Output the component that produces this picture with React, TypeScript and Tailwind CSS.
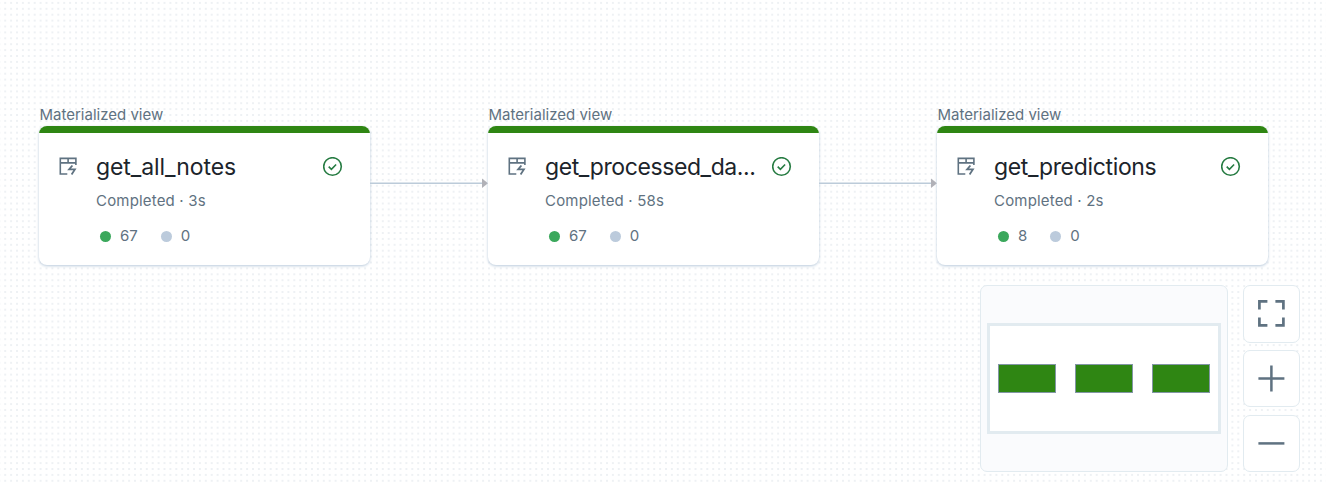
import React from 'react';

type Job = { name: string; tracking: string; time: string; done: number; queued: number };

const jobs: Job[] = [
  { name: 'get_all_notes', tracking: 'tracking-[-0.08px]', time: '3s', done: 67, queued: 0 },
  { name: 'get_processed_da...', tracking: 'tracking-[-0.4px]', time: '58s', done: 67, queued: 0 },
  { name: 'get_predictions', tracking: 'tracking-[-0.34px]', time: '2s', done: 8, queued: 0 },
];

function ViewIcon() {
  return (
    <svg className="h-[19px] w-[19px]" viewBox="0 0 19 19" fill="none">
      <path d="M8.3 17H1.3V1.4H16.9V8M1.3 5.9H17M9.1 1.4V5.9" stroke="#5f7281" strokeWidth="1.6" />
      <path d="M13.4 8.5L10.1 12.4H15.9L12.6 17.6" stroke="#5f7281" strokeWidth="1.8" />
    </svg>
  );
}

function CheckIcon() {
  return (
    <svg className="h-5 w-5 shrink-0" viewBox="0.5 0.5 20 20" fill="none" stroke="#277c43" strokeWidth="1.6">
      <circle cx="10" cy="10" r="8.8" />
      <path d="M6.2 10.1L8.9 12.8L13.6 8" />
    </svg>
  );
}

function Node({ job }: { job: Job }) {
  return (
    <div className="w-[331px] shrink-0">
      <div className="h-[21px] pl-[0.5px] text-[15px] leading-5">Materialized view</div>
      <div className="h-[139px] overflow-hidden rounded-lg bg-white shadow-[0_1px_3px_#b9cadb]">
        <div className="h-[7px] bg-[#2f8613]" />
        <div className="flex h-[132px] pl-5 pt-6">
          <div className="w-[37px] shrink-0"><ViewIcon /></div>
          <div className="min-w-0 flex-1">
            <div className="flex h-5 items-center">
              <div className={`w-[212px] whitespace-nowrap text-[23px] leading-8 text-[#1c242b] ${job.tracking}`}>{job.name}</div>
              <div className="ml-[15px]"><CheckIcon /></div>
            </div>
            <div className="mt-[14px] text-[15px] leading-5 tracking-[0.18px]">Completed · {job.time}</div>
            <div className="mt-[15px] flex items-center pl-1 text-[15px] leading-5">
              <span className="mr-[9px] h-[11px] w-[11px] rounded-full bg-[#3ba85c]" />
              <span>{job.done}</span>
              <span className="ml-[23px] mr-[9px] h-[11px] w-[11px] rounded-full bg-[#bccbdc]" />
              <span>{job.queued}</span>
            </div>
          </div>
        </div>
      </div>
    </div>
  );
}

function Edge() {
  return (
    <svg className="mt-[72px] h-3 w-[118px] shrink-0" viewBox="0 0 118 12">
      <path d="M0 6.2H113" stroke="#bccbd9" strokeWidth="1.5" />
      <path d="M112 1.5L118 6.2L112 11Z" fill="#b1b1b7" />
    </svg>
  );
}

const controls = [
  { label: 'Fit view', path: 'M2 10V2H10M18 2H26V10M26 18V26H18M10 26H2V18', width: 2.7 },
  { label: 'Zoom in', path: 'M1 14H27M14 1V27', width: 2.5 },
  { label: 'Zoom out', path: 'M1 14H27', width: 2.5 },
];

export default function App() {
  return (
    <div className="relative h-[482px] w-[1326px] overflow-hidden bg-white text-[#5f7281] [font-family:Inter,sans-serif]">
      <svg className="absolute inset-0 h-full w-full">
        <defs>
          <pattern id="dots" x="2.25" y="-0.05" width="5.9" height="5.9" patternUnits="userSpaceOnUse">
            <circle cx="2.95" cy="2.95" r="1" fill="#e9edf0" />
          </pattern>
        </defs>
        <rect width="100%" height="100%" fill="url(#dots)" />
      </svg>
      <div className="relative flex pl-[39px] pt-[105px]">
        {jobs.map((job, i) => (
          <React.Fragment key={job.name}>
            {i > 0 && <Edge />}
            <Node job={job} />
          </React.Fragment>
        ))}
      </div>
      <div className="absolute left-[980px] top-[285px] flex gap-[15px]">
        <div className="flex h-[187px] w-[248px] items-start justify-center rounded-[7px] border border-[#e2ebf0] bg-[#fafbfd] pt-[37px]">
          <div className="flex h-[111px] w-[234px] items-center justify-center gap-[19px] border-[3px] border-[#e2ebf0] bg-white">
            {jobs.map((job) => (
              <div key={job.name} className="h-[29px] w-[58px] border border-[#8296a5] bg-[#2f8613]" />
            ))}
          </div>
        </div>
        <div className="flex flex-col gap-2">
          {controls.map((c, i) => (
            <button key={c.label} aria-label={c.label} className={`flex w-[57px] items-center justify-center rounded-[7px] border border-[#e2ebf0] bg-white ${i === 0 ? 'h-[58px] -mb-px' : 'h-[57px]'}`}>
              <svg className="h-7 w-7" viewBox="0.6 0.6 28 28" fill="none" stroke="#5f7281" strokeWidth={c.width}>
                <path d={c.path} />
              </svg>
            </button>
          ))}
        </div>
      </div>
    </div>
  );
}
